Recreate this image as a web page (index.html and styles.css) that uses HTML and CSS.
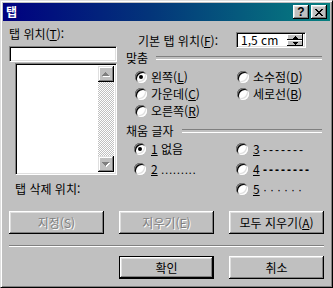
FILE: index.html
```html
<!DOCTYPE html>
<html lang="ko">
<head>
<meta charset="utf-8">
<title>탭</title>
<link rel="stylesheet" href="styles.css">
</head>
<body>
<div class="window">
  <div class="titlebar">
    <span class="title">탭</span>
    <div class="tbtns">
      <div class="tbtn"><span class="qmark">?</span></div>
      <div class="tbtn">
        <svg width="8" height="7" viewBox="0 0 8 7" shape-rendering="crispEdges"><path d="M0 0h2v1h-2z M6 0h2v1h-2z M1 1h2v1h-2z M5 1h2v1h-2z M2 2h4v1h-4z M3 3h2v1h-2z M2 4h4v1h-4z M1 5h2v1h-2z M5 5h2v1h-2z M0 6h2v1h-2z M6 6h2v1h-2z" fill="#000"/></svg>
      </div>
    </div>
  </div>
  <div class="content">
    <div class="main">
      <div class="left">
        <div class="lbl">탭 위치(<u>T</u>):</div>
        <div class="field textbox"></div>
        <div class="field listbox">
          <div class="vscroll">
            <div class="sbtn">
              <svg width="8" height="5" viewBox="0 0 8 5" shape-rendering="crispEdges"><path d="M4 1h1v1h-1z M3 2h3v1h-3z M2 3h5v1h-5z M1 4h7v1h-7z" fill="#fff"/><path d="M3 0h1v1h-1z M2 1h3v1h-3z M1 2h5v1h-5z M0 3h7v1h-7z" fill="#808080"/></svg>
            </div>
            <div class="sbtn">
              <svg width="8" height="5" viewBox="0 0 8 5" shape-rendering="crispEdges"><path d="M1 1h7v1h-7z M2 2h5v1h-5z M3 3h3v1h-3z M4 4h1v1h-1z" fill="#fff"/><path d="M0 0h7v1h-7z M1 1h5v1h-5z M2 2h3v1h-3z M3 3h1v1h-1z" fill="#808080"/></svg>
            </div>
          </div>
        </div>
        <div class="lbl del">탭 삭제 위치:</div>
      </div>
      <div class="right">
        <div class="defrow">
          <span>기본 탭 위치(<u>F</u>):</span>
          <div class="field spin">
            <span class="spinval">1,5 cm</span>
            <div class="spinbtns">
              <div class="spinbtn"><svg width="5" height="3" viewBox="0 0 5 3" shape-rendering="crispEdges"><path d="M2 0h1v1h-1z M1 1h3v1h-3z M0 2h5v1h-5z" fill="#000"/></svg></div>
              <div class="spinbtn"><svg width="5" height="3" viewBox="0 0 5 3" shape-rendering="crispEdges"><path d="M0 0h5v1h-5z M1 1h3v1h-3z M2 2h1v1h-1z" fill="#000"/></svg></div>
            </div>
          </div>
        </div>
        <div class="gtitle first">맞춤</div>
        <div class="rgrid align">
          <div class="ritem"><span class="radio on"></span><span>왼쪽(<u>L</u>)</span></div>
          <div class="ritem"><span class="radio"></span><span>소수점(<u>D</u>)</span></div>
          <div class="ritem"><span class="radio"></span><span>가운데(<u>C</u>)</span></div>
          <div class="ritem"><span class="radio"></span><span>세로선(<u>B</u>)</span></div>
          <div class="ritem"><span class="radio"></span><span>오른쪽(<u>R</u>)</span></div>
        </div>
        <div class="gtitle fill-title">채움 글자</div>
        <div class="rgrid fill">
          <div class="ritem"><span class="radio on"></span><span><u>1</u> 없음</span></div>
          <div class="ritem"><span class="radio"></span><span><u>3</u> <span class="lead dash">-------</span></span></div>
          <div class="ritem"><span class="radio"></span><span><u>2</u> <span class="lead period">.........</span></span></div>
          <div class="ritem"><span class="radio"></span><span><u>4</u> <span class="lead line">--------</span></span></div>
          <div class="ritem empty"></div>
          <div class="ritem"><span class="radio"></span><span><u>5</u> <span class="lead dots">······</span></span></div>
        </div>
      </div>
    </div>
    <div class="btnrow">
      <div class="btn disabled">지정(S)</div>
      <div class="btn disabled">지우기(E)</div>
      <div class="btn">모두 지우기(<u>A</u>)</div>
    </div>
    <div class="sep"></div>
    <div class="btnrow end">
      <div class="btn default">확인</div>
      <div class="btn">취소</div>
    </div>
  </div>
</div>
</body>
</html>
```
FILE: styles.css
```css
* { box-sizing: border-box; }
body {
  margin: 0;
  background: #c0c0c0;
  font-family: "Noto Sans CJK KR", "Noto Sans", sans-serif;
  font-size: 12px;
  color: #000;
}
u { text-decoration: underline; text-underline-offset: 1px; }

.window {
  width: 333px;
  height: 288px;
  background: #c0c0c0;
  border: 1px solid;
  border-color: #dfdfdf #000 #000 #dfdfdf;
  box-shadow: inset 1px 1px #fff, inset -1px -1px #808080;
  padding: 2px;
  display: flex;
  flex-direction: column;
}

.titlebar {
  height: 18px;
  flex: none;
  background: linear-gradient(to right, #000080 0%, #03357a 45%, #078080 100%);
  display: flex;
  align-items: center;
  justify-content: space-between;
  padding: 0 3px 0 3px;
}
.title {
  color: #fff;
  font-weight: bold;
  font-size: 12px;
  line-height: 18px;
}
.tbtns { display: flex; gap: 2px; }
.tbtn {
  width: 16px;
  height: 14px;
  background: #c0c0c0;
  box-shadow: inset -1px -1px #000, inset 1px 1px #fff, inset -2px -2px #808080, inset 2px 2px #dfdfdf;
  display: flex;
  align-items: center;
  justify-content: center;
}
.qmark {
  font-family: "Liberation Sans", sans-serif;
  font-weight: bold;
  font-size: 12px;
  line-height: 12px;
}

.content {
  flex: 1;
  padding: 6px 6px 0 6px;
  display: flex;
  flex-direction: column;
}
.main {
  display: grid;
  grid-template-columns: 108px 1fr;
  column-gap: 9px;
  height: 184px;
  flex: none;
}

.lbl { line-height: 14px; height: 14px; }
.field {
  background: #fff;
  border: 1px solid;
  border-color: #808080 #fff #fff #808080;
  box-shadow: inset 1px 1px #000, inset -1px -1px #dfdfdf;
}
.textbox { margin-top: 5px; height: 16px; width: 108px; }
.listbox {
  margin: 1px 0 0 6px;
  width: 102px;
  height: 112px;
  padding: 2px;
  display: flex;
  justify-content: flex-end;
}
.vscroll {
  width: 16px;
  display: flex;
  flex-direction: column;
  justify-content: space-between;
  background: repeating-conic-gradient(#c0c0c0 0 25%, #fff 0 50%) 0 0 / 2px 2px;
}
.sbtn {
  height: 16px;
  background: #c0c0c0;
  box-shadow: inset -1px -1px #000, inset 1px 1px #dfdfdf, inset -2px -2px #808080, inset 2px 2px #fff;
  display: flex;
  align-items: center;
  justify-content: center;
}
.del { margin: 7px 0 0 6px; }

.right { display: flex; flex-direction: column; }
.defrow {
  display: flex;
  align-items: center;
  height: 16px;
  margin: 5px 18px 0 12px;
}
.spin {
  margin-left: auto;
  width: 70px;
  height: 16px;
  padding: 2px;
  display: flex;
  align-items: center;
}
.spinval { flex: 1; padding-left: 2px; line-height: 12px; }
.spinbtns { width: 16px; height: 12px; display: flex; flex-direction: column; }
.spinbtn {
  flex: 1;
  background: #c0c0c0;
  box-shadow: inset -1px -1px #000, inset 1px 1px #fff;
  display: flex;
  align-items: center;
  justify-content: center;
}

.gtitle {
  display: flex;
  align-items: center;
  line-height: 14px;
  height: 14px;
}
.gtitle::after {
  content: "";
  flex: 1;
  height: 2px;
  margin: 0 2px 0 8px;
  border-top: 1px solid #808080;
  border-bottom: 1px solid #fff;
}
.gtitle.first { margin-top: 3px; }
.fill-title { margin-top: 5px; }

.rgrid {
  display: grid;
  grid-template-columns: 102px 1fr;
  padding-left: 9px;
}
.rgrid.align { grid-auto-rows: 17px; margin-top: 3px; }
.rgrid.fill { grid-auto-rows: 20px; margin-top: 1px; padding-left: 8px; }
.ritem { display: flex; align-items: center; gap: 4px; line-height: 14px; }
.fill .ritem { gap: 5px; }
.radio {
  position: relative;
  flex: none;
  width: 12px;
  height: 12px;
  border-radius: 50%;
  background: #fff;
  box-shadow: inset 1px 1px 0 #808080, inset -1px -1px 0 #fff, inset 2px 2px 0 #000, inset -2px -2px 0 #dfdfdf;
}
.radio.on::after {
  content: "";
  position: absolute;
  left: 4px;
  top: 4px;
  width: 4px;
  height: 4px;
  border-radius: 50%;
  background: #000;
}
.lead { font-family: "Liberation Sans", sans-serif; }
.dash { letter-spacing: 2px; }
.line { letter-spacing: 2px; font-weight: bold; }
.period { letter-spacing: 0.6px; }
.dots { letter-spacing: 3px; }

.btnrow {
  display: flex;
  justify-content: space-between;
  flex: none;
}
.btnrow.end { justify-content: flex-end; gap: 15px; margin-top: 9px; }
.btn {
  width: 95px;
  height: 23px;
  background: #c0c0c0;
  box-shadow: inset -1px -1px #000, inset 1px 1px #fff, inset -2px -2px #808080, inset 2px 2px #dfdfdf;
  display: flex;
  align-items: center;
  justify-content: center;
  line-height: 14px;
}
.btn.disabled { color: #808080; text-shadow: 1px 1px 0 #fff; }
.btn.default {
  border: 1px solid #000;
  box-shadow: inset -1px -1px #000, inset 1px 1px #fff, inset -2px -2px #808080, inset 2px 2px #dfdfdf;
}
.sep {
  margin-top: 11px;
  height: 2px;
  border-top: 1px solid #808080;
  border-bottom: 1px solid #fff;
  flex: none;
}
```
